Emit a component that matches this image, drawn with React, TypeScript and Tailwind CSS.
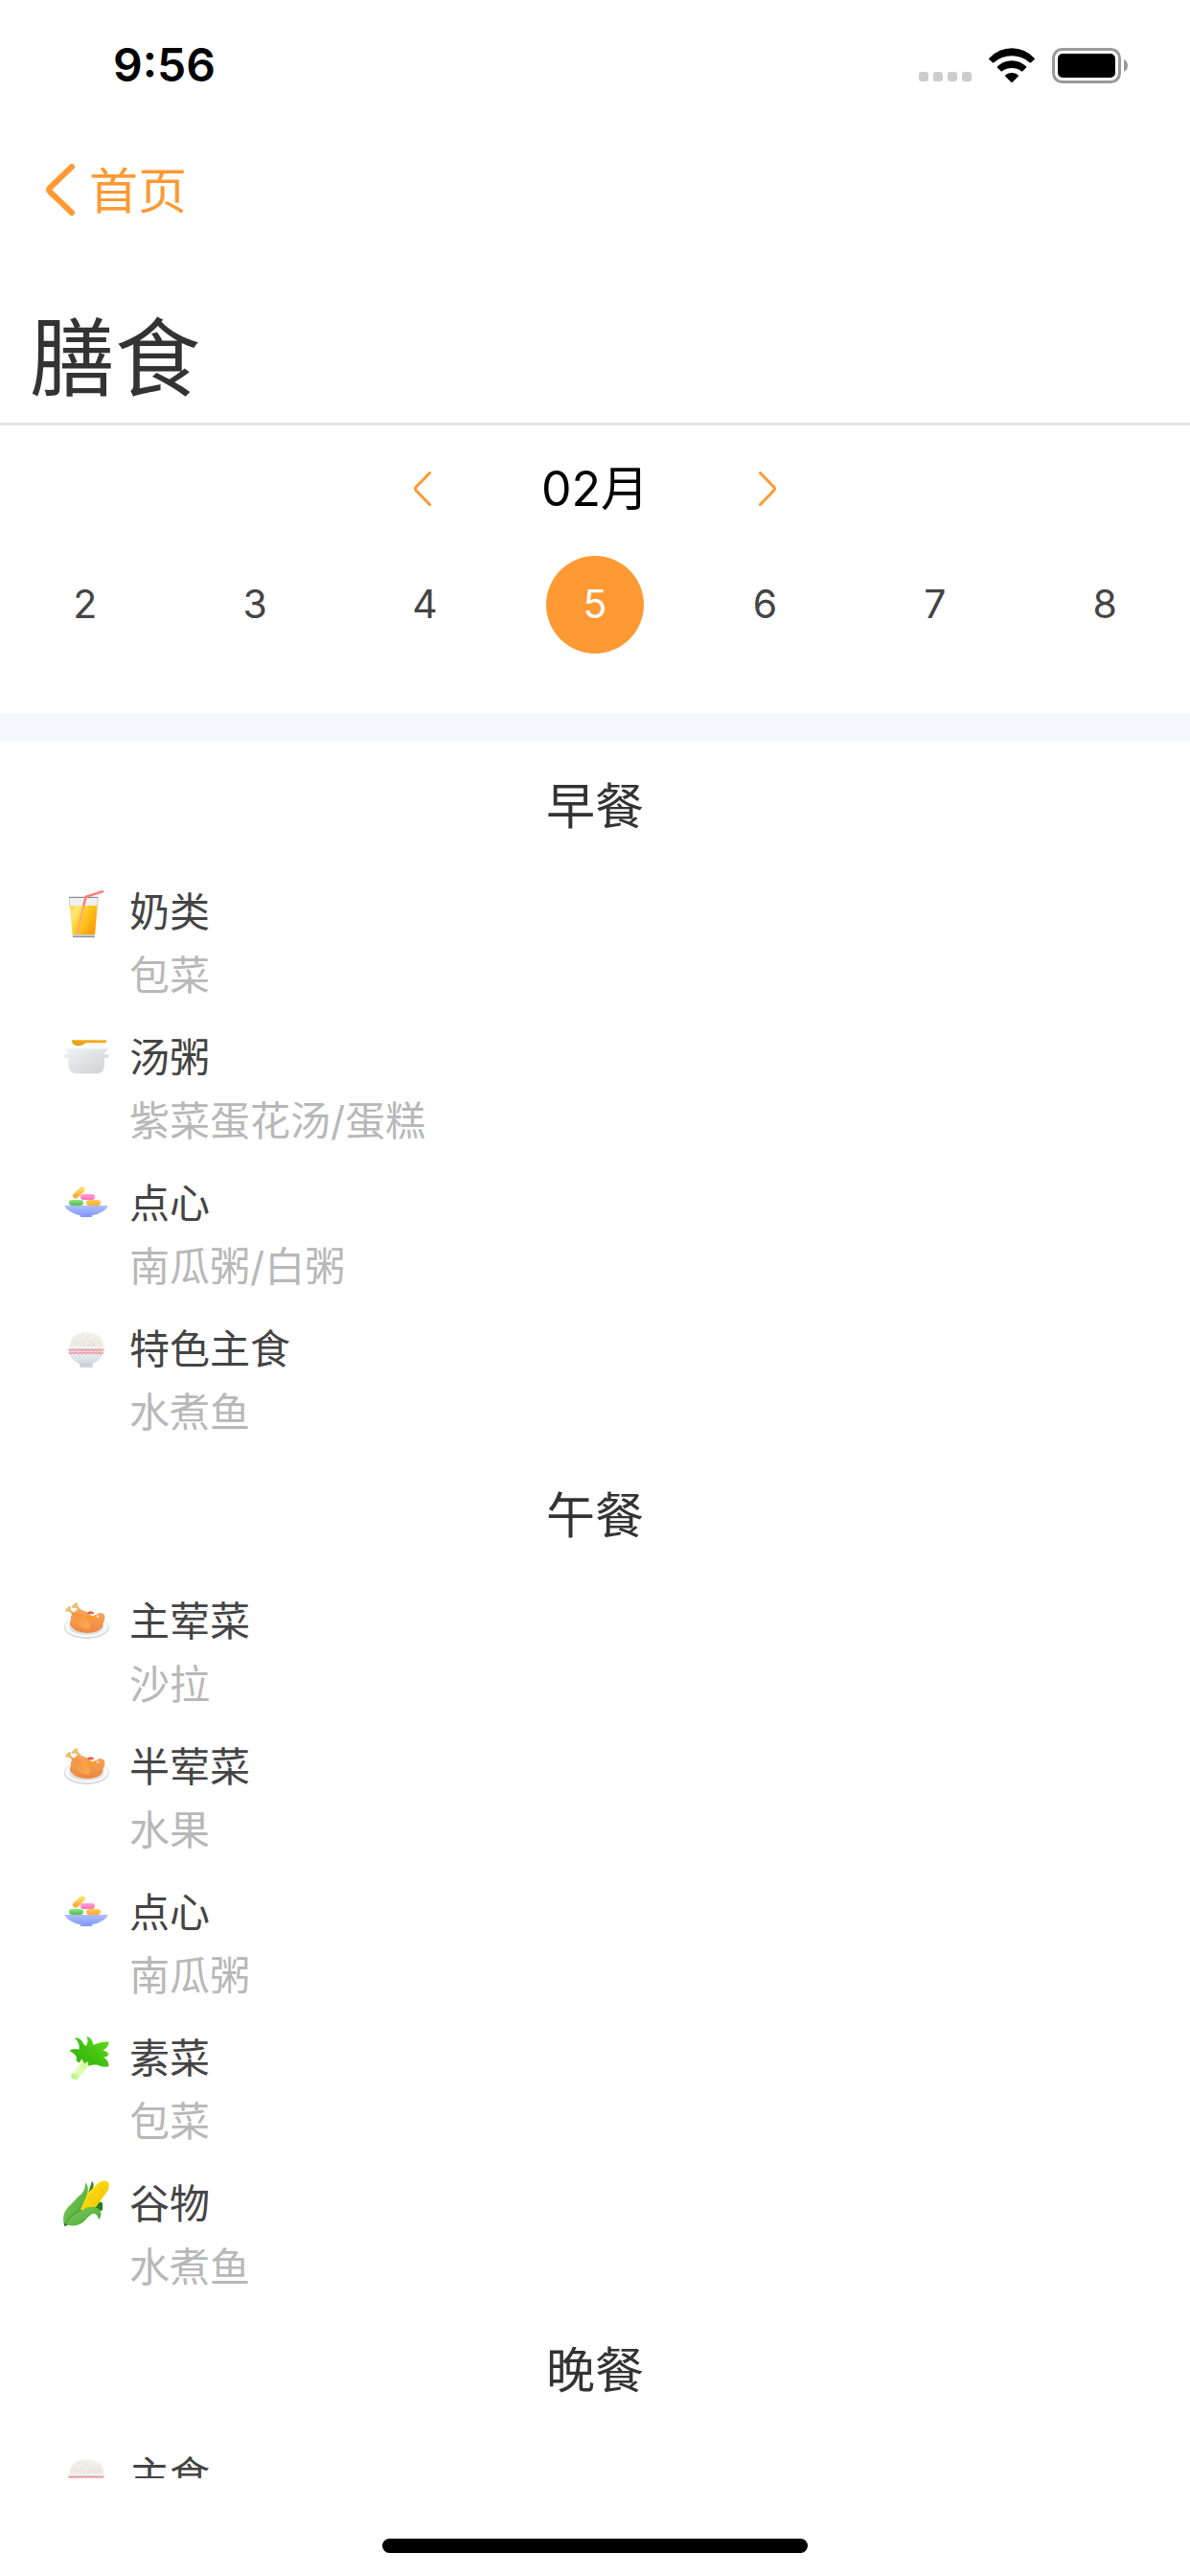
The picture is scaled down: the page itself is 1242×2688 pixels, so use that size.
import { useState } from "react";
import type { ReactNode } from "react";

type IconName = "juice" | "pot" | "snack" | "rice" | "chicken" | "greens" | "corn";

type Dish = { icon: IconName; name: string; detail: string };

const meals: { title: string; dishes: Dish[] }[] = [
  {
    title: "早餐",
    dishes: [
      { icon: "juice", name: "奶类", detail: "包菜" },
      { icon: "pot", name: "汤粥", detail: "紫菜蛋花汤/蛋糕" },
      { icon: "snack", name: "点心", detail: "南瓜粥/白粥" },
      { icon: "rice", name: "特色主食", detail: "水煮鱼" },
    ],
  },
  {
    title: "午餐",
    dishes: [
      { icon: "chicken", name: "主荤菜", detail: "沙拉" },
      { icon: "chicken", name: "半荤菜", detail: "水果" },
      { icon: "snack", name: "点心", detail: "南瓜粥" },
      { icon: "greens", name: "素菜", detail: "包菜" },
      { icon: "corn", name: "谷物", detail: "水煮鱼" },
    ],
  },
  {
    title: "晚餐",
    dishes: [{ icon: "rice", name: "主食", detail: "水煮鱼" }],
  },
];

const days = [2, 3, 4, 5, 6, 7, 8];

const drawings: Record<IconName, ReactNode> = {
  juice: (
    <>
      <path d="M18 28H109L99 152H30Z" fill="#eef0f4" />
      <path d="M20 54H107L99 144H29Z" fill="url(#juice)" />
      <path d="M18 28H109" stroke="#77777b" strokeWidth="3" />
      <path d="M18 28L20 54M109 28L107 54" stroke="#b5b5ba" strokeWidth="2" />
      <path d="M29 144H99L98 152H30Z" fill="#c9c9c9" />
      <path d="M30 152H98" stroke="#858585" strokeWidth="3" />
      <path d="M64 54L44 142" stroke="#ffad66" strokeWidth="8" />
      <path d="M126 9L71 26L64 54" fill="none" stroke="#ff8080" strokeWidth="8" strokeLinejoin="round" />
    </>
  ),
  pot: (
    <>
      <path d="M27 19H135V28H72C66 28 64 37 48 37C34 37 27 30 27 19Z" fill="url(#spoon)" />
      <path
        d="M4 46H141C135 52 130 56 129 64H140Q144 64 144 69Q143 74 136 75H129V96Q129 124 101 124H44Q16 124 16 96V75H8Q1 74 0 69Q0 64 4 64H16C15 56 10 52 4 46Z"
        fill="url(#pot)"
      />
    </>
  ),
  snack: (
    <>
      <path d="M39 50L59 31" stroke="url(#yellow)" strokeWidth="18" strokeLinecap="round" />
      <rect x="54" y="45" width="45" height="18" rx="9" fill="url(#pink)" />
      <rect x="18" y="63" width="45" height="18" rx="9" fill="url(#green)" />
      <rect x="72" y="63" width="45" height="18" rx="9" fill="url(#orange)" />
      <path d="M3 81H141Q130 104 90 112V117H54V112Q16 104 3 81Z" fill="url(#blue)" />
    </>
  ),
  rice: (
    <>
      <path d="M20 68Q22 22 73 22Q124 22 127 68Z" fill="url(#rice)" />
      <path
        d="M36 48l5 3M48 36l5-3M59 51l5 3M71 36l6 2M83 53l5-4M96 39l5 4M107 55l5 2M59 29l5 3M92 60l6-2M42 60l6-3M76 63l5-2"
        stroke="#dcd9ca"
        strokeWidth="3"
      />
      <path d="M15 66H129Q129 106 91 120L93 131H51L52 120Q15 106 15 66Z" fill="url(#bowl)" />
      <path d="M16 72H128L126 90H18Z" fill="#f3d3d5" />
      <path
        d="M17 75l6 4l6-4l6 4l6-4l6 4l6-4l6 4l6-4l6 4l6-4l6 4l6-4l6 4l6-4l6 4l6-4l6 4l6-4M17 85l6 4l6-4l6 4l6-4l6 4l6-4l6 4l6-4l6 4l6-4l6 4l6-4l6 4l6-4l6 4l6-4l6 4l6-4"
        fill="none"
        stroke="#dc7a80"
        strokeWidth="3"
      />
      <path d="M52 120Q72 126 92 120" fill="none" stroke="#c8ccd4" strokeWidth="3" />
    </>
  ),
  chicken: (
    <>
      <ellipse cx="73" cy="94" rx="70" ry="35" fill="#cfd5da" />
      <ellipse cx="73" cy="91" rx="69" ry="34" fill="#f7f9fa" stroke="#d3d8dc" strokeWidth="2" />
      <ellipse cx="73" cy="93" rx="54" ry="24" fill="#dde1e5" />
      <path d="M42 29L56 43M18 39L33 51" stroke="#e0bd68" strokeWidth="8" strokeLinecap="round" />
      <g fill="#e4c473">
        <circle cx="33" cy="28" r="6" />
        <circle cx="40" cy="22" r="6" />
        <circle cx="13" cy="39" r="6" />
        <circle cx="19" cy="33" r="6" />
      </g>
      <path
        d="M20 80Q26 72 24 58L36 46Q40 33 54 38Q76 42 88 56Q99 61 106 52Q118 43 129 54Q133 65 125 80Q125 108 76 111Q38 111 25 91Q20 89 20 80Z"
        fill="url(#chicken)"
      />
      <path d="M25 48Q47 42 65 58Q87 75 84 94Q76 102 62 95Q42 85 36 69Q32 59 25 48Z" fill="url(#leg)" />
      <path d="M73 58Q88 61 103 53Q99 69 83 69Q72 67 73 58Z" fill="#ff9b17" />
      <path d="M75 47L83 43L93 44L97 51L78 52Z" fill="#e95850" />
      <ellipse cx="108" cy="59" rx="4" ry="3" fill="#fff" opacity=".75" transform="rotate(-35 108 59)" />
    </>
  ),
  greens: (
    <>
      <path
        d="M51 87C44 87 38 79 42 71C37 61 27 54 19 51Q31 42 49 47C53 34 46 18 35 11Q54 6 64 30L71 36C78 28 78 14 73 5Q91 10 94 32C106 32 112 21 143 23C142 38 133 43 124 50Q138 51 143 62Q136 72 126 71Q143 80 143 100Q124 104 107 95Q91 94 79 98L70 93Z"
        fill="url(#leaf)"
      />
      <path d="M58 76L66 90L78 84L79 98L47 138Q42 143 35 140L28 137Q22 133 25 126L52 89Z" fill="url(#stem)" />
      <path d="M58 82L35 120" stroke="#f0ffd9" strokeWidth="6" strokeLinecap="round" />
    </>
  ),
  corn: (
    <>
      <path d="M80 34L90 2Q99 12 92 29L77 48Z" fill="#338b24" />
      <path d="M92 85Q110 62 123 71L123 94Q110 100 95 91Z" fill="#257d25" />
      <path d="M52 95L75 42L112 7Q130-4 141 6Q148 19 137 35L103 83L61 104Z" fill="url(#cob)" />
      <path
        d="M77 52l30 29M87 41l31 29M98 29l30 29M109 18l27 27M119 8l23 24M65 78l58-66M73 86l60-68M83 92l57-65"
        stroke="#e6ba00"
        strokeWidth="2"
        opacity=".7"
      />
      <path d="M2 138C-2 115 1 99 18 82L50 49Q72 33 69 5Q84 24 72 52Q62 72 53 97L11 141Z" fill="url(#husk)" />
      <path d="M8 139Q31 102 58 94Q86 76 110 89Q126 103 112 124Q104 99 90 106Q77 114 66 128Q43 149 8 139Z" fill="url(#husk)" />
      <path d="M8 132Q24 107 58 94" fill="none" stroke="#2e8728" strokeWidth="2" />
      <path d="M3 134L14 138L10 143H3Z" fill="#39702a" />
    </>
  ),
};

// Gradients shared by all of the food icons
function IconGradients() {
  return (
    <svg className="absolute size-0" aria-hidden="true">
      <defs>
        <linearGradient id="juice" x1="0" y1="0" x2="1" y2=".6">
          <stop stopColor="#ffd64a" />
          <stop offset=".25" stopColor="#ffe777" />
          <stop offset=".5" stopColor="#ffd024" />
          <stop offset="1" stopColor="#ff9d0a" />
        </linearGradient>
        <linearGradient id="spoon" x1="0" y1="1" x2="1" y2="0">
          <stop stopColor="#e39b0c" />
          <stop offset="1" stopColor="#f6b52c" />
        </linearGradient>
        <linearGradient id="pot" x1="0" y1="0" x2="1" y2="1">
          <stop stopColor="#f2f3f4" />
          <stop offset="1" stopColor="#cecfd1" />
        </linearGradient>
        <linearGradient id="yellow" x1="0" y1="0" x2="0" y2="1">
          <stop stopColor="#ffd966" />
          <stop offset="1" stopColor="#ffac38" />
        </linearGradient>
        <linearGradient id="orange" x1="0" y1="0" x2="0" y2="1">
          <stop stopColor="#ffcf56" />
          <stop offset="1" stopColor="#ffa936" />
        </linearGradient>
        <linearGradient id="pink" x1="0" y1="0" x2="0" y2="1">
          <stop stopColor="#ffa2d2" />
          <stop offset="1" stopColor="#ff70b8" />
        </linearGradient>
        <linearGradient id="green" x1="0" y1="0" x2="0" y2="1">
          <stop stopColor="#8ee583" />
          <stop offset="1" stopColor="#53bd52" />
        </linearGradient>
        <linearGradient id="blue" x1="0" y1="0" x2="0" y2="1">
          <stop stopColor="#adbfff" />
          <stop offset="1" stopColor="#7d97fb" />
        </linearGradient>
        <linearGradient id="rice" x1="0" y1="0" x2="0" y2="1">
          <stop stopColor="#f3f2ec" />
          <stop offset="1" stopColor="#e9e8df" />
        </linearGradient>
        <linearGradient id="bowl" x1="0" y1="0" x2="0" y2="1">
          <stop stopColor="#f1f4f8" />
          <stop offset=".6" stopColor="#dde3ea" />
          <stop offset="1" stopColor="#c8ced8" />
        </linearGradient>
        <linearGradient id="chicken" x1="0" y1="0" x2="0" y2="1">
          <stop stopColor="#f9a860" />
          <stop offset="1" stopColor="#ec8740" />
        </linearGradient>
        <linearGradient id="leg" x1="0" y1="0" x2="1" y2="1">
          <stop stopColor="#f0923f" />
          <stop offset="1" stopColor="#ffa750" />
        </linearGradient>
        <linearGradient id="leaf" x1="1" y1="0" x2="0" y2="1">
          <stop stopColor="#66e01f" />
          <stop offset=".5" stopColor="#41c20f" />
          <stop offset="1" stopColor="#2fae0b" />
        </linearGradient>
        <linearGradient id="stem" x1="1" y1="0" x2="0" y2="1">
          <stop stopColor="#c8f890" />
          <stop offset=".6" stopColor="#ddffba" />
          <stop offset="1" stopColor="#a8f26e" />
        </linearGradient>
        <linearGradient id="cob" x1="0" y1="0" x2="1" y2="1">
          <stop stopColor="#ffe81a" />
          <stop offset="1" stopColor="#f2c400" />
        </linearGradient>
        <linearGradient id="husk" x1="0" y1="0" x2="1" y2="1">
          <stop stopColor="#84ce5c" />
          <stop offset="1" stopColor="#45a435" />
        </linearGradient>
      </defs>
    </svg>
  );
}

function FoodIcon({ name }: { name: IconName }) {
  return (
    <svg viewBox="0 0 144 144" fill="none" className="mb-[2px] size-12 shrink-0 overflow-visible" aria-hidden="true">
      {drawings[name]}
    </svg>
  );
}

function StatusBar() {
  return (
    <div className="flex h-[136px] shrink-0 items-center justify-between pl-[118px] pr-16 text-black">
      <span className="text-5xl font-semibold">9:56</span>
      <div className="flex items-end">
        <div className="mb-[2px] mr-[18px] flex gap-[5px]">
          <span className="size-[10px] rounded-[3px] bg-[#cccccc]" />
          <span className="size-[10px] rounded-[3px] bg-[#cccccc]" />
          <span className="size-[10px] rounded-[3px] bg-[#cccccc]" />
          <span className="size-[10px] rounded-[3px] bg-[#cccccc]" />
        </div>
        <svg viewBox="0 0 144 111" className="mr-[18px] h-[37px] w-12" aria-hidden="true">
          <path d="M1 32Q32 1 72 1T143 32Q145 34 143 36L132 46Q130 48 128 46Q104 25 72 25T16 46Q14 48 12 46L1 36Q-1 34 1 32Z" />
          <path d="M27 58Q46 40 72 40T117 58Q119 60 117 62L106 73Q104 75 102 73Q89 63 72 63T42 73Q40 75 38 73L27 62Q25 60 27 58Z" />
          <path d="M53 84Q61 78 72 78T91 84Q94 87 92 89L74 107Q72 109 70 107L52 89Q50 87 53 84Z" />
        </svg>
        <svg viewBox="0 0 80 37" className="h-[37px] w-20" aria-hidden="true">
          <rect x="1.5" y="1.5" width="69" height="34" rx="9" fill="none" stroke="#999" strokeWidth="3" />
          <rect x="6" y="6" width="60" height="25" rx="5" />
          <path d="M75 12Q79 14 79 18.500T75 25Z" fill="#999" />
        </svg>
      </div>
    </div>
  );
}

export default function App() {
  const [selected, setSelected] = useState(5);

  return (
    <div
      lang="zh-CN"
      className="flex h-screen flex-col overflow-hidden bg-white font-['Inter','Noto_Sans_CJK_SC',sans-serif] text-[#333333]"
    >
      <IconGradients />
      <StatusBar />

      <header className="shrink-0 border-b-[3px] border-[#e4e4e4]">
        <nav className="flex h-[124px] items-center pl-12">
          <a href="#home" className="flex items-center gap-[15px] text-[51px] leading-[72px] text-[#ff9933]">
            <svg viewBox="0 0 30 54" className="h-[54px] w-[30px]" fill="none" aria-hidden="true">
              <path d="M27 3L4 25Q2 27 4 29L27 51" stroke="currentColor" strokeWidth="6" strokeLinecap="round" />
            </svg>
            <span className="pt-1">首页</span>
          </a>
        </nav>
        <h1 className="pl-[31px] pt-[47px] text-[89px] leading-[134px]">膳食</h1>
      </header>

      <section className="shrink-0 border-b-[30px] border-[#f6f8fd] pb-[62px]">
        <div className="mx-auto mb-1 flex h-[132px] w-[378px] items-center justify-between text-[#ff9933]">
          <button type="button" aria-label="上个月">
            <svg viewBox="0 0 18 36" className="h-9 w-[18px]" fill="none" aria-hidden="true">
              <path d="M16.500 1.500L2 16.500Q1 18 2 19.500L16.500 34.500" stroke="currentColor" strokeWidth="3" strokeLinecap="round" />
            </svg>
          </button>
          <h2 className="text-[50px] leading-[72px] text-black">02月</h2>
          <button type="button" aria-label="下个月">
            <svg viewBox="0 0 18 36" className="h-9 w-[18px]" fill="none" aria-hidden="true">
              <path d="M1.500 1.500L16 16.500Q17 18 16 19.500L1.500 34.500" stroke="currentColor" strokeWidth="3" strokeLinecap="round" />
            </svg>
          </button>
        </div>
        <div className="grid grid-cols-7 justify-items-center">
          {days.map((day) => (
            <button
              key={day}
              type="button"
              aria-pressed={day === selected}
              onClick={() => setSelected(day)}
              className={
                day === selected
                  ? "size-[102px] rounded-full bg-[#ff9933] text-[41px] text-white"
                  : "size-[102px] rounded-full text-[41px] text-[#444444]"
              }
            >
              {day}
            </button>
          ))}
        </div>
      </section>

      <main className="min-h-0 flex-1 overflow-hidden pt-[14px]">
        {meals.map((meal) => (
          <section key={meal.title} className="pb-px">
            <h2 className="mb-[23px] text-center text-[51px] leading-[108px]">{meal.title}</h2>
            <ul>
              {meal.dishes.map((dish) => (
                <li key={dish.name} className="pb-5 pl-[66px] text-[42px] leading-[66px]">
                  <div className="flex items-center gap-[21px] text-[#444444]">
                    <FoodIcon name={dish.icon} />
                    <h3>{dish.name}</h3>
                  </div>
                  <p className="pl-[69px] text-[#b8b8b8]">{dish.detail}</p>
                </li>
              ))}
            </ul>
          </section>
        ))}
      </main>

      <footer className="flex h-[102px] shrink-0 items-end justify-center pb-6">
        <div className="h-[15px] w-[444px] rounded-full bg-black" />
      </footer>
    </div>
  );
}
